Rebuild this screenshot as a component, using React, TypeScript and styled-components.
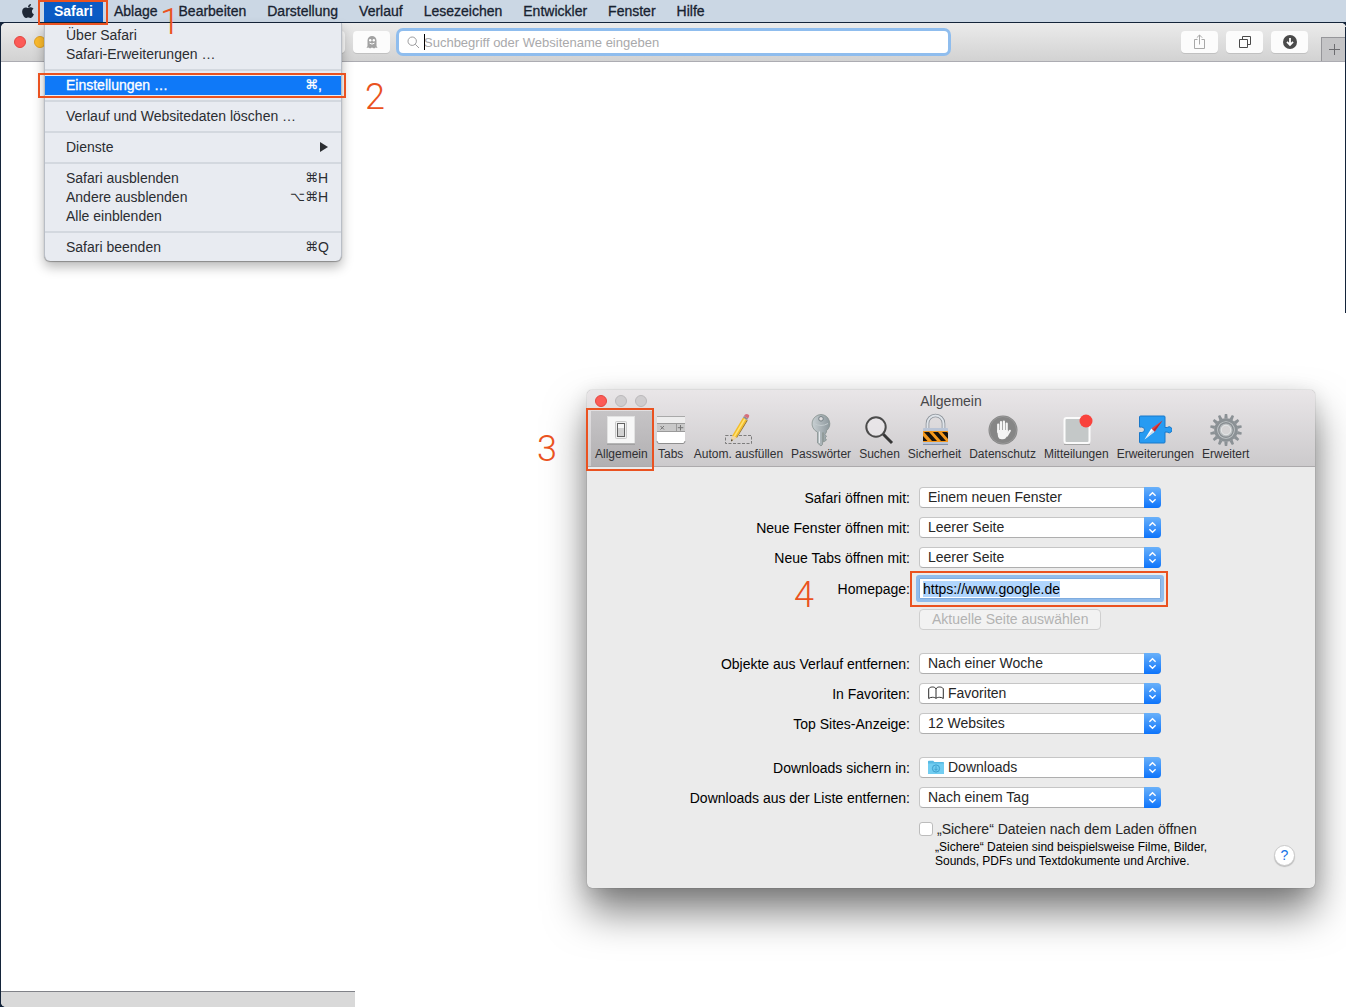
import React, { useEffect, useRef } from "react";
import styled, { createGlobalStyle, css } from "styled-components";
import { FaApple } from "react-icons/fa";

const ORANGE = "#ea5220";
const INK = "#2b2d31";

const GlobalStyle = createGlobalStyle`
  *, *::before, *::after { box-sizing: border-box; }
  body {
    margin: 0;
    background: #fff;
    font-family: "Liberation Sans", Arial, "DejaVu Sans", sans-serif;
    font-size: 14px;
    color: ${INK};
  }
  button, input, select { font: inherit; color: inherit; }
  ul { list-style: none; margin: 0; padding: 0; }
`;

const Desktop = styled.div`
  position: relative;
  display: flex;
  flex-direction: column;
  min-height: 100vh;
  overflow: hidden;
`;

/* ---------- annotations ---------- */

const Marker = styled.span<{ $inset: string }>`
  position: absolute;
  inset: ${(p) => p.$inset};
  border: 2px solid ${ORANGE};
  pointer-events: none;
  z-index: 5;
`;

const Step = styled.span<{ $x: number; $y: number }>`
  position: absolute;
  left: ${(p) => p.$x}px;
  top: ${(p) => p.$y}px;
  font-family: Roboto, Inter, sans-serif;
  font-size: 36px;
  line-height: 36px;
  font-weight: 300;
  color: ${ORANGE};
  pointer-events: none;
  z-index: 6;
`;

/* ---------- menu bar ---------- */

const MenuBar = styled.nav`
  position: relative;
  z-index: 3;
  display: flex;
  align-items: center;
  height: 22px;
  padding-left: 20px;
  background: #cbd7e4;
  flex: none;
`;

const AppleButton = styled.button`
  display: flex;
  width: 24px;
  padding: 0;
  border: 0;
  background: none;
  color: #1f2836;
`;

const MenuTitles = styled.ul`
  display: flex;
  gap: 1px;
`;

const MenuTitleItem = styled.li`
  position: relative;
`;

const MenuTitle = styled.button<{ $active?: boolean }>`
  display: block;
  height: 22px;
  padding: 0 10px;
  border: 0;
  line-height: 22px;
  background: ${(p) => (p.$active ? "#0a5bc4" : "none")};
  color: ${(p) => (p.$active ? "#fff" : "#182230")};
  font-weight: ${(p) => (p.$active ? 700 : 400)};
  -webkit-text-stroke: ${(p) => (p.$active ? "0" : "0.3px")};
`;

const Dropdown = styled.ul`
  position: absolute;
  top: 23px;
  left: 0;
  width: 298px;
  padding: 3px 0 4px;
  background: #e8ebf1;
  border: solid #b9bec6;
  border-width: 0 1px;
  border-radius: 0 0 6px 6px;
  box-shadow: 0 1px 1px rgba(0, 0, 0, 0.3), 0 6px 12px rgba(0, 0, 0, 0.28);
`;

const DropdownRow = styled.li`
  position: relative;
`;

const Divider = styled.li`
  height: 12px;
  padding: 5px 0;
  background: #d3d8df content-box;
`;

const Command = styled.button<{ $active?: boolean }>`
  display: flex;
  justify-content: space-between;
  align-items: center;
  width: 100%;
  height: 19px;
  padding: 0 12px 2px 21px;
  border: 0;
  text-align: left;
  white-space: nowrap;
  background: ${(p) => (p.$active ? "#0f79f8" : "none")};
  color: ${(p) => (p.$active ? "#fff" : INK)};
  -webkit-text-stroke: ${(p) => (p.$active ? "0.3px" : "0")};
`;

const Keys = styled.span`
  display: flex;
`;

const Modifier = styled.span`
  font-family: "DejaVu Sans", sans-serif;
  font-size: 13px;
`;

const KeyLetter = styled.span`
  width: 11px;
`;

/* ---------- browser window ---------- */

const Backdrop = styled.div`
  display: flex;
  flex: 1;
  flex-direction: column;
  padding: 1px 0 0 1px;
  background: #14243a;
`;

const Browser = styled.div`
  position: relative;
  display: flex;
  flex: 1;
  flex-direction: column;
  border-radius: 5px 5px 0 5px;
  background: #fff;
`;

const WindowEdge = styled.span`
  position: absolute;
  top: 4px;
  right: 0;
  width: 1px;
  height: 286px;
  background: #14243a;
`;

const BrowserBar = styled.div`
  display: grid;
  grid-template-columns: 1fr minmax(0, 549px) 1fr;
  align-items: center;
  height: 39px;
  border-bottom: 1px solid #acacb2;
  border-radius: 5px 5px 0 0;
  background: linear-gradient(#ebebeb, #d2d2d2);
`;

const BarStart = styled.div`
  display: flex;
  align-items: center;
  gap: 8px;
  padding: 0 9px 0 13px;
`;

const BarEnd = styled.div`
  display: flex;
  justify-content: flex-end;
  align-items: center;
  align-self: stretch;
  gap: 8px;
`;

const Light = styled.button<{ $fill: string; $ring: string }>`
  width: 12px;
  height: 12px;
  padding: 0;
  border: 1px solid ${(p) => p.$ring};
  border-radius: 50%;
  background: ${(p) => p.$fill};
`;

const Grow = styled.span`
  flex: 1;
`;

const BarButton = styled.button`
  display: flex;
  align-items: center;
  justify-content: center;
  width: 37px;
  height: 22px;
  padding: 0;
  border: 0;
  border-radius: 4px;
  background: #fcfcfc;
  box-shadow: 0 1px 0 rgba(0, 0, 0, 0.1);
`;

const NewTab = styled.button`
  display: flex;
  align-items: center;
  justify-content: center;
  align-self: flex-end;
  width: 25px;
  height: 24px;
  margin-left: 5px;
  padding: 0;
  border: solid #96969a;
  border-width: 1px 0 0 1px;
  background: #c4c4c6;
`;

const Address = styled.label`
  position: relative;
  display: flex;
  align-items: center;
  gap: 4px;
  height: 22px;
  padding-left: 8px;
  border-radius: 4px;
  background: #fff;
  box-shadow: 0 0 0 3px #8fbdee;
`;

const AddressInput = styled.input`
  flex: 1;
  min-width: 0;
  height: 20px;
  padding: 0;
  border: 0;
  outline: 0;
  background: none;
  font-size: 13px;
  &::placeholder { color: #a9a9ab; opacity: 1; }
`;

const Caret = styled.span`
  position: absolute;
  left: 25px;
  top: 3px;
  width: 1px;
  height: 16px;
  background: #000;
`;

const StatusStrip = styled.div`
  width: 354px;
  max-width: 100%;
  height: 16px;
  margin-top: auto;
  border-top: 1px solid #808288;
  border-bottom-left-radius: 5px;
  background: #d9d9d9;
`;

/* ---------- preferences window ---------- */

const Preferences = styled.section`
  position: absolute;
  left: 587px;
  top: 390px;
  width: 728px;
  border-radius: 5px;
  background: #ebebeb;
  box-shadow: 0 0 1px rgba(0, 0, 0, 0.5), 0 24px 40px rgba(0, 0, 0, 0.5),
    0 4px 20px rgba(0, 0, 0, 0.12);
`;

const PrefHeader = styled.header`
  border-bottom: 1px solid #acaaac;
  border-radius: 5px 5px 0 0;
  background: linear-gradient(#e9e6e8, #cccacc);
`;

const TitleRow = styled.div`
  display: grid;
  grid-template-columns: 1fr auto 1fr;
  align-items: center;
  height: 21px;
  padding: 0 8px;
`;

const Lights = styled.div`
  display: flex;
  gap: 8px;
`;

const Title = styled.h1`
  margin: 0;
  font-size: 14px;
  line-height: 22px;
  font-weight: 400;
  color: #48484a;
`;

const Tools = styled.ul`
  display: flex;
  padding-left: 4px;
`;

const ToolItem = styled.li`
  position: relative;
`;

const Tool = styled.button<{ $active?: boolean }>`
  display: flex;
  flex-direction: column;
  align-items: center;
  min-width: 38px;
  height: 55px;
  padding: 2px 4px 0;
  border: 0;
  font-size: 12px;
  line-height: 14px;
  white-space: nowrap;
  color: #303033;
  background: ${(p) => (p.$active ? "linear-gradient(#c6c4c6, #b2b0b2)" : "none")};
  svg { display: block; margin: 0 -4px; }
`;

const Form = styled.form`
  display: flex;
  flex-direction: column;
  gap: 23px;
  padding: 20px 20px 0 0;
  color: #000;
`;

const Group = styled.div`
  display: flex;
  flex-direction: column;
  gap: 9px;
`;

const rowGrid = css`
  display: grid;
  grid-template-columns: 323px 1fr;
  column-gap: 9px;
  align-items: center;
`;

const Row = styled.div<{ $tall?: boolean }>`
  ${rowGrid}
  height: ${(p) => (p.$tall ? 23 : 21)}px;
`;

const RowLabel = styled.label`
  text-align: right;
  white-space: nowrap;
`;

const Control = styled.div`
  grid-column: 2;
  display: flex;
  align-items: center;
  gap: 4px;
`;

const SelectBox = styled.div`
  position: relative;
  width: 242px;
  height: 21px;
`;

const Select = styled.select<{ $icon?: boolean }>`
  appearance: none;
  display: block;
  width: 100%;
  height: 21px;
  padding: 0 28px 1px ${(p) => (p.$icon ? 28 : 8)}px;
  border: 1px solid #c6c6c6;
  border-bottom-color: #aeaeae;
  border-radius: 4px;
  outline: 0;
  background: #fff;
  color: #262626;
`;

const Stepper = styled.span`
  position: absolute;
  top: 0;
  right: 0;
  display: flex;
  align-items: center;
  justify-content: center;
  width: 17px;
  height: 21px;
  border-radius: 0 4px 4px 0;
  background: linear-gradient(#69b1fa, #0d74fb);
  pointer-events: none;
`;

const SelectIcon = styled.span`
  position: absolute;
  left: 9px;
  top: 3px;
  display: flex;
  pointer-events: none;
`;

const HomeField = styled.div`
  position: relative;
  width: 242px;
`;

const HomeInput = styled.input`
  display: block;
  width: 100%;
  height: 21px;
  padding: 0 3px;
  border: 1px solid #7facdf;
  outline: 0;
  background: #fff;
  box-shadow: 0 0 0 3px #90bcec;
  border-radius: 1px;
  &::selection { background: #b0d5fd; color: #000; }
`;

const PageButton = styled.button`
  height: 21px;
  padding: 0 12px;
  border: 1px solid #cfcfcf;
  border-radius: 4px;
  background: #f2f2f2;
  color: #b2b2b2;
  line-height: 19px;
  white-space: nowrap;
`;

const Check = styled.input`
  appearance: none;
  width: 14px;
  height: 14px;
  margin: 0;
  border: 1px solid #bcbcbc;
  border-radius: 3px;
  background: #fff;
`;

const CheckLabel = styled.label`
  color: #262626;
  white-space: nowrap;
`;

const Footer = styled.div`
  ${rowGrid}
  padding-bottom: 20px;
`;

const FooterContent = styled.div`
  grid-column: 2;
  display: flex;
  justify-content: space-between;
  align-items: flex-end;
  padding-left: 16px;
`;

const Hint = styled.p`
  width: 300px;
  margin: 0;
  font-size: 12px;
  line-height: 14px;
`;

const HelpButton = styled.button`
  width: 21px;
  height: 21px;
  margin-bottom: 2px;
  padding: 0;
  border: 1px solid #cacaca;
  border-radius: 50%;
  background: #fff;
  box-shadow: 0 1px 1px rgba(0, 0, 0, 0.2);
  color: #1672e6;
  line-height: 19px;
`;

/* ---------- icons ---------- */

const GhostIcon = () => (
  <svg width="14" height="14" viewBox="0 0 14 14">
    <path d="M2.5 11V5.5a4.5 4.5 0 0 1 9 0V11l1 2-2-.6-1.4 1.1L7 12.4l-2 1.1-1.5-1.1-2 .6z" fill="#a2a2a2" />
    <circle cx="5.2" cy="5.2" r="1.2" fill="#fff" />
    <circle cx="8.8" cy="5.2" r="1.2" fill="#fff" />
    <path d="M4.6 8.2q2.4 1.8 4.8 0" fill="none" stroke="#fff" />
  </svg>
);

const GlassIcon = () => (
  <svg width="13" height="13" viewBox="0 0 13 13" fill="none" stroke="#9c9c9e">
    <circle cx="5.2" cy="5.2" r="4.2" />
    <path d="M8.3 8.3 12 12" />
  </svg>
);

const ShareIcon = () => (
  <svg width="14" height="16" viewBox="0 0 14 16" fill="none" stroke="#a8a8a8">
    <path d="M4.5 5.5h-3v9h10v-9h-3M6.5 10.5V1M3.8 3.7 6.5 1l2.7 2.7" />
  </svg>
);

const TabsIcon = () => (
  <svg width="14" height="14" viewBox="0 0 14 14" fill="none" stroke="#4a4a4a">
    <path d="M1.5 4.5h8v8h-8zM4.5 4V1.5h8v8H10" />
  </svg>
);

const DownIcon = () => (
  <svg width="14" height="14" viewBox="0 0 14 14">
    <circle cx="7" cy="7" r="7" fill="#4a4a4a" />
    <path d="M7 3v6M4 6.8 7 10l3-3.2" fill="none" stroke="#fff" strokeWidth="1.8" />
  </svg>
);

const PlusIcon = () => (
  <svg width="11" height="11" viewBox="0 0 11 11" stroke="#6c6c70">
    <path d="M5.5 0v11M0 5.5h11" />
  </svg>
);

const Chevrons = () => (
  <svg width="9" height="13" viewBox="0 0 9 13" fill="none" stroke="#fff" strokeWidth="1.4">
    <path d="M1.4 4.7 4.5 1.7l3.1 3M1.4 8.3l3.1 3 3.1-3" />
  </svg>
);

const BookIcon = () => (
  <svg width="16" height="15" viewBox="0 0 16 15" fill="none" stroke="#2c2c2c">
    <path d="M8 12.5V3C7.5 1.5 6 1 4.5 1S1.5 1.5.7 2.7V12.5C1.5 11.7 3 11.3 4.5 11.3S7.5 11.7 8 12.5C8.5 11.7 10 11.3 11.5 11.3s3 .4 3.8 1.2V2.7C14.5 1.5 13 1 11.5 1S8.5 1.5 8 3" />
  </svg>
);

const FolderIcon = () => (
  <svg width="16" height="15" viewBox="0 0 16 15">
    <path d="M0 1.5Q0 .7.8.7h4.4l1.2 1.3H15.2q.8 0 .8.8V13.2q0 .8-.8.8H.8q-.8 0-.8-.8z" fill="#57b9e2" />
    <path d="M0 3.5h16v9.7q0 .8-.8.8H.8q-.8 0-.8-.8z" fill="#71cdf1" />
    <circle cx="8" cy="8.5" r="3.6" fill="none" stroke="#3c9fcd" />
    <path d="M8 6.2v4M6.3 8.7 8 10.4l1.7-1.7" fill="none" stroke="#3c9fcd" />
  </svg>
);

const SwitchIcon = () => (
  <svg width="34" height="34" viewBox="0 0 34 34">
    <rect x="3.5" y="3.5" width="27" height="27" fill="#f7f7f7" stroke="#e2e2e2" />
    <path d="M3 31h28" stroke="#8a8a8a" />
    <rect x="11.5" y="8.5" width="11" height="17" rx="1" fill="#efefef" stroke="#c9c9c9" />
    <rect x="13.5" y="10.5" width="7" height="13" fill="#d2d2d2" stroke="#626262" />
    <path d="M14 11h6v4h-6z" fill="#f6f6f6" />
  </svg>
);

const TabBarIcon = () => (
  <svg width="34" height="34" viewBox="0 0 34 34">
    <rect x="3" y="3" width="28" height="7" fill="#ededed" />
    <path d="M3 3.5h28" stroke="#a9a9a9" />
    <rect x="3" y="10" width="28" height="9" fill="#c9c9c9" />
    <path d="M3 10.5h28M3 18.5h28M22.5 10v9" stroke="#9a9a9a" />
    <path d="M3 19h28v9q0 2-2 2H5q-2 0-2-2z" fill="#fff" />
    <path d="M3 28q0 2.5 2 2.5h24q2 0 2-2.5" fill="none" stroke="#8f8f8f" />
    <path d="m6.5 13 3.5 3.5m0-3.5-3.5 3.5M26.5 12v5.5M23.8 14.7h5.5" stroke="#747474" />
  </svg>
);

const PencilIcon = () => (
  <svg width="34" height="34" viewBox="0 0 34 34">
    <rect x="4.5" y="22.5" width="26" height="8" fill="none" stroke="#7d7d7d" strokeDasharray="3 1.5" />
    <path d="m10 28.5 1.3-6L22 4.5l4 2.5L15.5 24.5z" fill="#f4bd27" />
    <path d="m12.5 23.3 10.7-18 1.4.9L14 24z" fill="#ffe173" />
    <path d="m15.5 24.5 10.500-17.500.7.5L16 24.800z" fill="#8d6719" />
    <path d="m10 28.500 1.300-6 4.200 2z" fill="#eed5aa" />
    <path d="m10 28.500.5-2.300 1.500.8z" fill="#222" />
    <path d="m22 4.500 1-1.500 4 2.500-1 1.500z" fill="#8b8e95" />
    <path d="m23 3 1-1.500q1.800-.9 3.300 0t.7 2.300l-1 1.700z" fill="#d66f7c" />
  </svg>
);

const KeyIcon = () => (
  <svg width="34" height="34" viewBox="0 0 34 34">
    <defs>
      <linearGradient id="steel" x1="0" x2="1">
        <stop offset="0" stopColor="#c9d0d3" />
        <stop offset="1" stopColor="#8c979c" />
      </linearGradient>
    </defs>
    <path d="M17 1.500a9.200 9.200 0 0 0-3.500 17.600V30l3.500 3 1.500-1.500V19.700h1V29l3-2-1.500-2 1.500-1.500-1.500-2 1.500-2.500v-1.300A9.200 9.200 0 0 0 17 1.500z" fill="url(#steel)" stroke="#87928f" strokeWidth=".8" />
    <circle cx="17" cy="5.800" r="2.300" fill="#dedcde" stroke="#758185" />
    <path d="M15.500 18.500V30" stroke="#e6eaec" />
    <path d="M10 10.500q7 4 14 0" fill="none" stroke="#c3cbce" />
  </svg>
);

const LoupeIcon = () => (
  <svg width="34" height="34" viewBox="0 0 34 34">
    <circle cx="14" cy="14" r="9.700" fill="#eceaec" fillOpacity=".7" stroke="#4b4b4b" strokeWidth="2" />
    <path d="m21.300 21.300 8.700 8.700" stroke="#363636" strokeWidth="3" />
  </svg>
);

const LockIcon = () => (
  <svg width="34" height="34" viewBox="0 0 34 34">
    <path d="M9.500 17v-6.500a8 8 0 0 1 16 0V17" fill="none" stroke="#8c9299" strokeWidth="3.600" />
    <path d="M9.500 17v-6.500a8 8 0 0 1 16 0V17" fill="none" stroke="#dfe4ea" strokeWidth="2" />
    <rect x="5" y="15" width="25" height="17" rx="1" fill="#b9c4d6" />
    <rect x="5" y="18" width="25" height="11" fill="#f5981b" />
    <path d="M6 19h5l8 9h-5zM15 19h5l8 9h-5zM24 19h5l1 1v6zM5 23l4.500 5H5z" fill="#17120c" />
    <path d="M5 31.500h25" stroke="#8492a9" />
  </svg>
);

const HandIcon = () => (
  <svg width="34" height="34" viewBox="0 0 34 34">
    <circle cx="17" cy="17" r="14.500" fill="#868686" />
    <circle cx="17" cy="17" r="13.500" fill="none" stroke="#979797" />
    <g stroke="#f6f6f6" strokeLinecap="round" fill="none" strokeWidth="2.200">
      <path d="M12.200 19v-7.500M15 18V9M17.900 18V8.500M20.700 18.500V10.500" />
      <path d="m21 22.500 2.800-4.700" />
    </g>
    <path d="M11.100 17h10.700v4l-1.300 3q-1 2.300-3.500 2.300h-1.500q-2.600 0-3.400-2.600z" fill="#f6f6f6" />
  </svg>
);

const NoticeIcon = () => (
  <svg width="34" height="34" viewBox="0 0 34 34">
    <rect x="5.500" y="5" width="25" height="25" rx="2" fill="#c4c8c8" stroke="#fbfbfb" strokeWidth="2" />
    <path d="M5 31.500h26" stroke="#a5a5a5" />
    <circle cx="27" cy="8" r="6.500" fill="#f9423c" />
  </svg>
);

const PuzzleIcon = () => (
  <svg width="34" height="34" viewBox="0 0 34 34">
    <path d="M1.500 4q0-1 1-1H26q1 0 1 1V14.500h2.200a3 3 0 1 1 0 4.600H27V29q0 1-1 1H2.500q-1 0-1-1V19.500h2.300a2.700 2.700 0 1 0 0-5.400H1.500z" fill="#279bf2" stroke="#1878ca" />
    <path d="m24.500 7.500-8 11.200-3.200-3.200z" fill="#e74341" />
    <path d="m6.500 26.500 6.800-11 3.200 3.200z" fill="#fff" />
    <path d="m24.500 7.500-8 11.200-1.600-1.600z" fill="#b72832" />
    <path d="m6.500 26.500 8.400-9.400 1.600 1.600z" fill="#cddded" />
  </svg>
);

const GearIcon = () => (
  <svg width="34" height="34" viewBox="0 0 34 34">
    {Array.from({ length: 14 }, (_, i) => (
      <path key={i} d="M15.300 5.500 15.800 1h2.400l.5 4.500z" fill="#8b9195" transform={`rotate(${(i * 360) / 14} 17 17)`} />
    ))}
    <circle cx="17" cy="17" r="10.300" fill="#c7cbcd" stroke="#8b9195" strokeWidth="3" />
    <circle cx="17" cy="17" r="7.300" fill="#b9bdbf" stroke="#888e92" strokeWidth="1.400" />
    <circle cx="17" cy="17" r="4.800" fill="#d4d3d4" stroke="#e6e8e9" />
  </svg>
);

/* ---------- data ---------- */

const MENUS = ["Ablage", "Bearbeiten", "Darstellung", "Verlauf", "Lesezeichen", "Entwickler", "Fenster", "Hilfe"];

interface CommandData {
  label: string;
  mods?: string;
  letter?: string;
  active?: boolean;
  submenu?: boolean;
}

const COMMANDS: CommandData[][] = [
  [{ label: "Über Safari" }, { label: "Safari-Erweiterungen …" }],
  [{ label: "Einstellungen …", mods: "⌘", letter: ",", active: true }],
  [{ label: "Verlauf und Websitedaten löschen …" }],
  [{ label: "Dienste", submenu: true }],
  [
    { label: "Safari ausblenden", mods: "⌘", letter: "H" },
    { label: "Andere ausblenden", mods: "⌥⌘", letter: "H" },
    { label: "Alle einblenden" },
  ],
  [{ label: "Safari beenden", mods: "⌘", letter: "Q" }],
];

const TOOLS = [
  { label: "Allgemein", icon: <SwitchIcon /> },
  { label: "Tabs", icon: <TabBarIcon /> },
  { label: "Autom. ausfüllen", icon: <PencilIcon /> },
  { label: "Passwörter", icon: <KeyIcon /> },
  { label: "Suchen", icon: <LoupeIcon /> },
  { label: "Sicherheit", icon: <LockIcon /> },
  { label: "Datenschutz", icon: <HandIcon /> },
  { label: "Mitteilungen", icon: <NoticeIcon /> },
  { label: "Erweiterungen", icon: <PuzzleIcon /> },
  { label: "Erweitert", icon: <GearIcon /> },
];

interface ChoiceProps {
  id: string;
  label: string;
  value: string;
  icon?: React.ReactNode;
}

const Choice = ({ id, label, value, icon }: ChoiceProps) => (
  <Row>
    <RowLabel htmlFor={id}>{label}</RowLabel>
    <SelectBox>
      <Select id={id} $icon={!!icon}>
        <option>{value}</option>
      </Select>
      {icon && <SelectIcon>{icon}</SelectIcon>}
      <Stepper><Chevrons /></Stepper>
    </SelectBox>
  </Row>
);

const SafariMenu = () => (
  <Dropdown>
    {COMMANDS.map((group, g) => (
      <React.Fragment key={g}>
        {g > 0 && <Divider />}
        {group.map((c) => (
          <DropdownRow key={c.label}>
            <Command type="button" $active={c.active}>
              {c.label}
              {c.mods && (
                <Keys>
                  <Modifier>{c.mods}</Modifier>
                  <KeyLetter>{c.letter}</KeyLetter>
                </Keys>
              )}
              {c.submenu && (
                <svg width="10" height="10" viewBox="0 0 10 10"><path d="M1 0v10l8-5z" fill={INK} /></svg>
              )}
            </Command>
            {c.active && <Marker $inset="-3px -5px -3px -7px" />}
          </DropdownRow>
        ))}
      </React.Fragment>
    ))}
  </Dropdown>
);

export default function App() {
  const home = useRef<HTMLInputElement>(null);

  useEffect(() => {
    home.current?.focus({ preventScroll: true });
    home.current?.select();
  }, []);

  return (
    <Desktop>
      <GlobalStyle />
      <MenuBar>
        <AppleButton type="button" aria-label="Apple"><FaApple size={16} /></AppleButton>
        <MenuTitles>
          <MenuTitleItem>
            <MenuTitle type="button" $active>Safari</MenuTitle>
            <SafariMenu />
            <Marker $inset="0 -5px -3px -6px" />
          </MenuTitleItem>
          {MENUS.map((m) => (
            <MenuTitleItem key={m}><MenuTitle type="button">{m}</MenuTitle></MenuTitleItem>
          ))}
        </MenuTitles>
      </MenuBar>

      <Backdrop>
        <Browser>
          <BrowserBar>
            <BarStart>
              <Light type="button" aria-label="Schließen" $fill="#fc5b57" $ring="#e2463f" />
              <Light type="button" aria-label="Minimieren" $fill="#fdbc2e" $ring="#dfa023" />
              <Light type="button" aria-label="Zoomen" $fill="#35c84a" $ring="#27aa35" />
              <Grow />
              <BarButton type="button" aria-label="Seitenleiste" />
              <BarButton type="button" aria-label="Ghostery"><GhostIcon /></BarButton>
            </BarStart>
            <Address>
              <GlassIcon />
              <AddressInput aria-label="Adresse" placeholder="Suchbegriff oder Websitename eingeben" />
              <Caret />
            </Address>
            <BarEnd>
              <BarButton type="button" aria-label="Teilen"><ShareIcon /></BarButton>
              <BarButton type="button" aria-label="Tabs"><TabsIcon /></BarButton>
              <BarButton type="button" aria-label="Downloads"><DownIcon /></BarButton>
              <NewTab type="button" aria-label="Neuer Tab"><PlusIcon /></NewTab>
            </BarEnd>
          </BrowserBar>
          <StatusStrip />
          <WindowEdge />
        </Browser>
      </Backdrop>

      <Preferences>
        <PrefHeader>
          <TitleRow>
            <Lights>
              <Light type="button" aria-label="Schließen" $fill="#fc5b57" $ring="#e2463f" />
              <Light type="button" aria-label="Minimieren" $fill="#cfcdcf" $ring="#bbb9bb" />
              <Light type="button" aria-label="Zoomen" $fill="#cfcdcf" $ring="#bbb9bb" />
            </Lights>
            <Title>Allgemein</Title>
          </TitleRow>
          <Tools>
            {TOOLS.map((t, i) => (
              <ToolItem key={t.label}>
                <Tool type="button" $active={i === 0}>
                  {t.icon}
                  {t.label}
                </Tool>
                {i === 0 && <Marker $inset="-3px -2px -5px -5px" />}
              </ToolItem>
            ))}
          </Tools>
        </PrefHeader>

        <Form onSubmit={(e) => e.preventDefault()}>
          <Group>
            <Choice id="open" label="Safari öffnen mit:" value="Einem neuen Fenster" />
            <Choice id="window" label="Neue Fenster öffnen mit:" value="Leerer Seite" />
            <Choice id="tab" label="Neue Tabs öffnen mit:" value="Leerer Seite" />
            <Row $tall>
              <RowLabel htmlFor="home">Homepage:</RowLabel>
              <HomeField>
                <HomeInput id="home" ref={home} defaultValue="https://www.google.de" spellCheck={false} />
                <Marker $inset="-7px -7px -8px -9px" />
              </HomeField>
            </Row>
            <Row>
              <Control><PageButton type="button" disabled>Aktuelle Seite auswählen</PageButton></Control>
            </Row>
          </Group>
          <Group>
            <Choice id="history" label="Objekte aus Verlauf entfernen:" value="Nach einer Woche" />
            <Choice id="favorites" label="In Favoriten:" value="Favoriten" icon={<BookIcon />} />
            <Choice id="topsites" label="Top Sites-Anzeige:" value="12 Websites" />
          </Group>
          <Group>
            <Choice id="folder" label="Downloads sichern in:" value="Downloads" icon={<FolderIcon />} />
            <Choice id="list" label="Downloads aus der Liste entfernen:" value="Nach einem Tag" />
            <div>
              <Row $tall>
                <Control>
                  <Check type="checkbox" id="safe" />
                  <CheckLabel htmlFor="safe">„Sichere“ Dateien nach dem Laden öffnen</CheckLabel>
                </Control>
              </Row>
              <Footer>
                <FooterContent>
                  <Hint>„Sichere“ Dateien sind beispielsweise Filme, Bilder, Sounds, PDFs und Textdokumente und Archive.</Hint>
                  <HelpButton type="button" aria-label="Hilfe">?</HelpButton>
                </FooterContent>
              </Footer>
            </div>
          </Group>
        </Form>
      </Preferences>

      <Step $x={160} $y={4}>1</Step>
      <Step $x={365} $y={79}>2</Step>
      <Step $x={537} $y={431}>3</Step>
      <Step $x={794} $y={577}>4</Step>
    </Desktop>
  );
}
